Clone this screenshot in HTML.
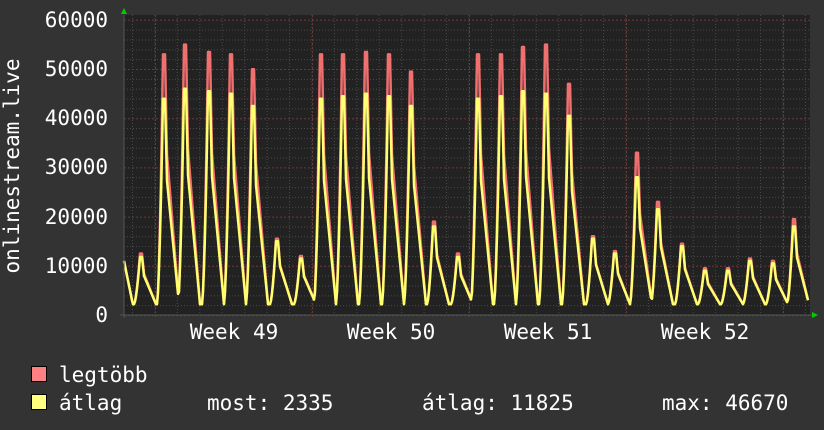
<!DOCTYPE html>
<html><head><meta charset="utf-8"><style>
html,body{margin:0;padding:0;background:#333;width:824px;height:430px;overflow:hidden}
svg{display:block}
text{font-family:"DejaVu Sans Mono","Liberation Mono",monospace;font-size:21px;fill:#fff}
</style></head><body>
<svg id="s" width="824" height="430" xmlns="http://www.w3.org/2000/svg">
<rect width="824" height="430" fill="#333"/>
<rect x="124" y="15" width="686" height="300" fill="#222"/>
<g id="grid"></g>
<g id="data"></g>
<line x1="124" y1="15" x2="124" y2="318" stroke="#555"/>
<line x1="120" y1="315" x2="812" y2="315" stroke="#555"/>
<polygon points="121,14 127,14 124,8" fill="#0c0"/>
<polygon points="812,312 812,318 818,315" fill="#0c0"/>
<g text-anchor="end">
<text x="108" y="27">60000</text><text x="108" y="76">50000</text><text x="108" y="125">40000</text>
<text x="108" y="174">30000</text><text x="108" y="224">20000</text><text x="108" y="273">10000</text>
<text x="108" y="322">0</text>
</g>
<text transform="translate(19,166) rotate(-90)" text-anchor="middle">onlinestream.live</text>
<g text-anchor="middle">
<text x="234" y="339">Week 49</text><text x="391" y="339">Week 50</text>
<text x="548" y="339">Week 51</text><text x="705" y="339">Week 52</text>
</g>
<rect x="31.5" y="366.5" width="15" height="15" fill="#ff8080" stroke="#000"/>
<rect x="31.5" y="394.5" width="15" height="15" fill="#ffff80" stroke="#000"/>
<text x="59" y="382">legtöbb</text>
<text x="59" y="410">átlag</text>
<text x="207" y="410">most: 2335</text>
<text x="422" y="410">átlag: 11825</text>
<text x="662" y="410">max: 46670</text>
</svg>
<script>
var NS="http://www.w3.org/2000/svg",g=document.getElementById("grid"),d=document.getElementById("data");
function ln(x1,y1,x2,y2,c,da){var l=document.createElementNS(NS,"line");l.setAttribute("x1",x1);l.setAttribute("y1",y1);l.setAttribute("x2",x2);l.setAttribute("y2",y2);l.setAttribute("stroke",c);l.setAttribute("stroke-dasharray",da);g.appendChild(l);}
for(var i=0;i<=30;i++){var y=315-i*9.84+0.5;ln(124,y,810,y,i%5==0?"#6a3a3a":"#4a4a4a",i%5==0?"2,2":"1,2");}
for(var x=132.5;x<810;x+=22.43){ln(x,15,x,315,"#4a4a4a","1,2");}
[155,312,469,626,783].forEach(function(x){ln(x+0.5,15,x+0.5,318,"#6a3a3a","2,2");});
var P=[[140,12500,11800],[163,53000,44000],[184,55000,46000],[208,53500,45500],[230,53000,45000],[252,50000,42500],[276,15500,15000],[300,12000,11500],[320,53000,44000],[342,53000,44500],[365,53500,45000],[388,53000,44500],[410,49500,42500],[433,19000,18000],[457,12500,11800],[477,53000,44000],[500,53000,44500],[522,54500,45500],[545,55000,45000],[568,47000,40500],[592,16000,15500],[614,13000,12500],[636,33000,28000],[657,23000,21500],[681,14500,14000],[704,9500,9000],[727,9500,9000],[749,11500,11000],[772,11000,10500],[793,19500,18000]];
function val(x,k){var v=2200;for(var j=0;j<P.length;j++){var px=P[j][0],h=P[j][k],dx=x-px,f=0;
 if(dx<=0&&dx>-6)f=Math.pow((dx+6)/6,1.6);else if(dx>0&&dx<2)f=1;else if(dx>=2&&dx<4)f=1-(dx-2)/2*0.4;else if(dx>=4&&dx<16)f=0.6*(1-(dx-4)/12);
 v=Math.max(v,2200+(h-2200)*f);}
 if(x<133)v=Math.max(v,11000-(x-124)*1000);return v;}
function path(k,c){var s="";for(var x=124;x<=808;x+=1){var y=315-val(x,k)*295/60000;s+=(x==124?"M":"L")+x+","+y.toFixed(1);}
 var p=document.createElementNS(NS,"path");p.setAttribute("d",s);p.setAttribute("fill","none");p.setAttribute("stroke",c);p.setAttribute("stroke-width","2.5");p.setAttribute("stroke-linejoin","round");d.appendChild(p);}
path(1,"#f07070");path(2,"#ffff70");
</script>
</body></html>
